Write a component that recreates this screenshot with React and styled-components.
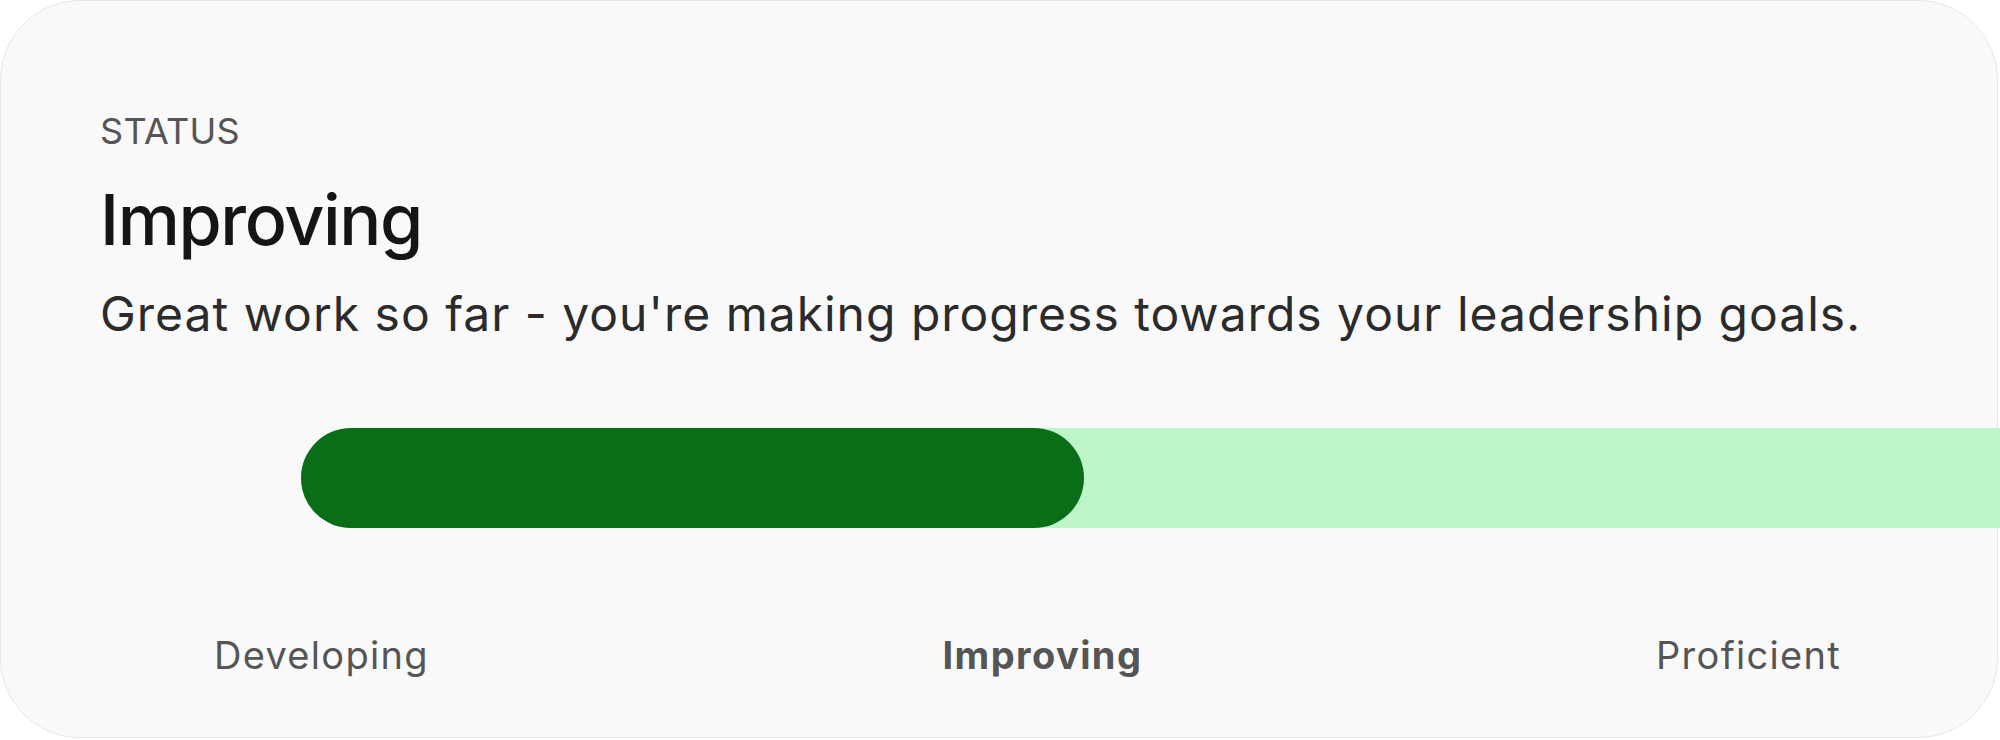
import React from "react";
import styled, { createGlobalStyle } from "styled-components";

const GlobalStyle = createGlobalStyle`
  html, body {
    margin: 0;
    padding: 0;
    background: #ffffff;
    overflow: hidden;
  }
  body {
    font-family: "Inter", "Liberation Sans", sans-serif;
  }
`;

// Styled Components
const Card = styled.section`
  box-sizing: border-box;
  width: 1998px;
  height: 738px;
  padding: 112px 0 0 99px;
  background: #f9f9f9;
  border: 1px solid #e7e7e7;
  border-radius: 80px;
  display: flex;
  flex-direction: column;
`;

const Eyebrow = styled.p`
  margin: 0;
  font-size: 36px;
  line-height: 1;
  letter-spacing: 0.3px;
  color: #555555;
  text-transform: uppercase;
`;

const StatusTitle = styled.h2`
  margin: 36px 0 0;
  font-size: 70px;
  line-height: 1;
  font-weight: 500;
  letter-spacing: -1.4px;
  color: #151515;
`;

const Message = styled.p`
  margin: 35px 0 0;
  font-size: 48px;
  line-height: 1;
  letter-spacing: 1px;
  color: #2b2b2b;
`;

const Track = styled.div`
  margin: 90px 0 0 201px;
  width: 1800px;
  height: 100px;
  background: #bdf5c8;
  border-radius: 50px 0 0 50px;
  display: flex;
`;

const Fill = styled.div`
  height: 100%;
  background: #0a6e19;
  border-radius: 50px;
`;

const Steps = styled.div`
  margin: 108px 0 0 114px;
  width: 1627px;
  display: flex;
  justify-content: space-between;
`;

const Step = styled.span`
  font-size: 38px;
  line-height: 1;
  color: #555555;
  font-weight: ${(p) => (p.$current ? 700 : 400)};
  letter-spacing: ${(p) => (p.$current ? "1.4px" : "1.3px")};
`;

const steps = ["Developing", "Improving", "Proficient"];

export default function App() {
  const current = "Improving";

  return (
    <>
      <GlobalStyle />
      <Card>
        <Eyebrow>Status</Eyebrow>
        <StatusTitle>{current}</StatusTitle>
        <Message>
          Great work so far - you're making progress towards your leadership goals.
        </Message>

        <Track>
          <Fill style={{ width: "783px" }} />
        </Track>

        <Steps>
          {steps.map((s) => (
            <Step key={s} $current={s === current}>
              {s}
            </Step>
          ))}
        </Steps>
      </Card>
    </>
  );
}
